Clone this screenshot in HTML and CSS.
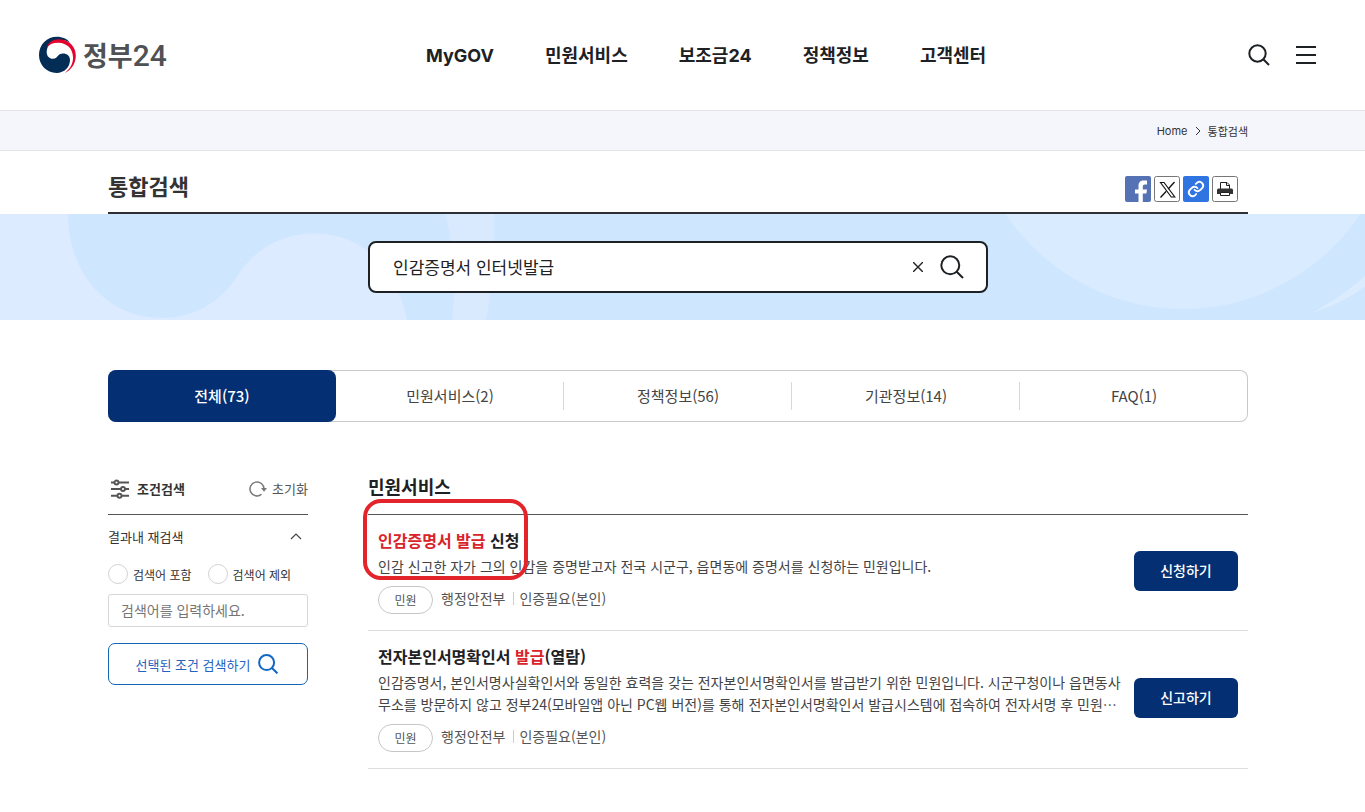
FILE: index.html
```html
<!DOCTYPE html>
<html lang="ko">
<head>
<meta charset="utf-8">
<meta name="viewport" content="width=device-width, initial-scale=1">
<title>통합검색 | 정부24</title>
<link rel="stylesheet" href="styles.css">
</head>
<body>
<header class="header">
  <a class="logo" href="#">
    <svg class="logo-mark" viewBox="0 0 38 38" aria-hidden="true">
      <path d="M1 19C1 8.500 9 .8 19 .8c5.500 0 10 2.200 13 5.700C28.500 4.500 25 3.600 21 4.200 13 5 8.500 10 8.700 16.500c.2 4 3 6.500 6.300 6.300 5-.2 4.500-5.300 10-5.300 4.200 0 7 2.500 7 6.500C32 31 26.500 36.900 18.500 36.900 8.500 36.900 1 29 1 19z" fill="#032d55"/>
      <path d="M8.500 12C10 6 15.500 3 21.500 3.200 31 3.500 38 10.500 37.800 20c-.2 7.500-4.500 14-11 17 5.500-4.500 8.500-9.500 8.200-16C34.600 12.500 29 7 20.500 6.700 15 6.600 11 8.500 8.500 12z" fill="#e4032e"/>
    </svg>
    <span>정부<span class="logo-num">24</span></span>
  </a>
  <nav class="gnb">
    <a href="#">MyGOV</a>
    <a href="#">민원서비스</a>
    <a href="#">보조금24</a>
    <a href="#">정책정보</a>
    <a href="#">고객센터</a>
  </nav>
  <div class="tools">
    <button type="button" aria-label="검색">
      <svg width="22" height="22" viewBox="0 0 22 22" fill="none" stroke="#1e2124" stroke-width="2"><circle cx="9.500" cy="9.500" r="8.200"/><path d="M15.300 15.300l5.700 5.700"/></svg>
    </button>
    <button type="button" aria-label="전체메뉴">
      <svg width="20" height="18" viewBox="0 0 20 18" fill="#1e2124"><path d="M0 0h20v2H0zM0 8h20v2H0zM0 16h20v2H0z"/></svg>
    </button>
  </div>
</header>

<div class="crumbs">
  <a href="#">Home</a>
  <svg width="6" height="10" viewBox="0 0 6 10" fill="none" stroke="#333" aria-hidden="true"><path d="M1 1l4 4-4 4"/></svg>
  <span>통합검색</span>
</div>

<div class="page-title">
  <h1>통합검색</h1>
  <div class="share">
    <button type="button" aria-label="페이스북 공유">
      <svg viewBox="0 0 26 26"><rect width="26" height="26" rx="2" fill="#5572b5"/><path d="M13.500 26v-8.500H10v-4h3.500V10c0-3.700 2-5.500 5-5.500H22v4h-2c-1.600 0-2.200.7-2.200 2v3H22l-.6 4h-3.600V26z" fill="#fff"/></svg>
    </button>
    <button type="button" aria-label="X 공유">
      <svg viewBox="0 0 26 26"><rect x=".5" y=".5" width="25" height="25" rx="2" fill="#fff" stroke="#777"/><path d="M6.500 6.500h3.500L20.800 21h-3.500z" fill="none" stroke="#111" stroke-width="1.100"/><path d="M20.500 6l-6.300 7M12.300 15.200L6.500 21.500" stroke="#111" stroke-width="1.300"/></svg>
    </button>
    <button type="button" aria-label="링크 복사">
      <svg viewBox="0 0 26 26"><rect width="26" height="26" rx="2" fill="#2f74e0"/><g transform="translate(4 4) scale(.75)" fill="none" stroke="#fff" stroke-width="2.500" stroke-linecap="round"><path d="M10 13a5 5 0 0 0 7.500.5l3-3a5 5 0 0 0-7-7l-1.700 1.700"/><path d="M14 11a5 5 0 0 0-7.500-.5l-3 3a5 5 0 0 0 7 7l1.700-1.700"/></g></svg>
    </button>
    <button type="button" aria-label="인쇄">
      <svg viewBox="0 0 26 26"><rect x=".5" y=".5" width="25" height="25" rx="2" fill="#fff" stroke="#777"/><path d="M8.500 13V6.500h6.500l2.500 2.500v4" fill="none" stroke="#222"/><path d="M14.500 6.500v3h3" fill="none" stroke="#222"/><path d="M6.500 12.500h13a1.500 1.500 0 0 1 1.500 1.500v4H5v-4a1.500 1.500 0 0 1 1.500-1.500z" fill="#333"/><path d="M8.500 16.500h9v3h-9z" fill="#fff" stroke="#222"/></svg>
    </button>
  </div>
</div>

<div class="banner">
  <svg class="banner-art" viewBox="0 0 1365 106" preserveAspectRatio="xMidYMin slice" aria-hidden="true">
    <path d="M0 0h68C68 60 108 104 161 104c34 0 60-17 75-40 18-29 45-44.500 78-44.500 49 0 82 33.500 93 86.500H0z" fill="#dcebff"/>
    <path d="M445 0h49q1 60-8 106h-34q7-55-7-106z" fill="#d9eaff"/>
    <circle cx="1183" cy="-118" r="213" fill="#d9ebff"/>
    <path d="M1365 62q-25 22-53 37 30-10 53-26z" fill="#dbecff"/>
  </svg>
  <form class="search" role="search">
    <input type="text" value="인감증명서 인터넷발급" aria-label="검색어">
    <button type="reset" aria-label="지우기">
      <svg width="10" height="10" viewBox="0 0 10 10" stroke="#222" stroke-width="1.400"><path d="M0 0l10 10M10 0L0 10"/></svg>
    </button>
    <button type="button" aria-label="검색">
      <svg width="24" height="24" viewBox="0 0 24 24" fill="none" stroke="#1e2124" stroke-width="2"><circle cx="10.300" cy="10.300" r="9"/><path d="M16.700 16.700l6.300 6.300"/></svg>
    </button>
  </form>
</div>

<nav class="tabs">
  <a class="tab active" href="#">전체(73)</a>
  <a class="tab" href="#">민원서비스(2)</a>
  <a class="tab" href="#">정책정보(56)</a>
  <a class="tab" href="#">기관정보(14)</a>
  <a class="tab" href="#">FAQ(1)</a>
</nav>

<div class="content">
  <aside class="filter">
    <div class="filter-head">
      <svg width="20" height="20" viewBox="0 0 20 20" fill="#fff" stroke="#555" stroke-width="1.900" aria-hidden="true"><path d="M1 3.500h18M1 10h18M1 16.800h18"/><circle cx="6.500" cy="3.500" r="2"/><circle cx="13" cy="10" r="2"/><circle cx="9.500" cy="16.800" r="2"/></svg>
      <h2>조건검색</h2>
      <button type="button" class="reset">
        <svg width="18" height="16" viewBox="0 0 18 16" fill="none" stroke="#777" stroke-width="1.500" aria-hidden="true"><path d="M12.500 13.300A7 7 0 1 1 15 8"/><path d="M12 7h6l-3 3.800z" fill="#777" stroke="none"/></svg>
        초기화
      </button>
    </div>
    <button type="button" class="fold">
      결과내 재검색
      <svg width="12" height="7" viewBox="0 0 12 7" fill="none" stroke="#444" stroke-width="1.200" aria-hidden="true"><path d="M1 6l5-5 5 5"/></svg>
    </button>
    <div class="radios">
      <label><input type="radio" name="scope">검색어 포함</label>
      <label><input type="radio" name="scope">검색어 제외</label>
    </div>
    <input class="keyword" type="text" placeholder="검색어를 입력하세요." aria-label="결과내 검색어">
    <button type="button" class="apply">
      선택된 조건 검색하기
      <svg width="20" height="20" viewBox="0 0 20 20" fill="none" stroke="#1266c4" stroke-width="2" aria-hidden="true"><circle cx="8.600" cy="8.600" r="7.500"/><path d="M14 14l5.400 5.400"/></svg>
    </button>
  </aside>

  <main class="results">
    <h2>민원서비스</h2>
    <article class="item marked">
      <div class="item-body">
        <h3><a href="#"><em>인감증명서 발급</em> 신청</a></h3>
        <p>인감 신고한 자가 그의 인감을 증명받고자 전국 시군구, 읍면동에 증명서를 신청하는 민원입니다.</p>
        <div class="meta"><span class="chip">민원</span><span>행정안전부</span><span class="auth">인증필요(본인)</span></div>
      </div>
      <button type="button" class="go">신청하기</button>
    </article>
    <article class="item">
      <div class="item-body">
        <h3><a href="#">전자본인서명확인서 <em>발급</em>(열람)</a></h3>
        <p>인감증명서, 본인서명사실확인서와 동일한 효력을 갖는 전자본인서명확인서를 발급받기 위한 민원입니다. 시군구청이나 읍면동사무소를 방문하지 않고 정부24(모바일앱 아닌 PC웹 버전)를 통해 전자본인서명확인서 발급시스템에 접속하여 전자서명 후 민원⋯</p>
        <div class="meta"><span class="chip">민원</span><span>행정안전부</span><span class="auth">인증필요(본인)</span></div>
      </div>
      <button type="button" class="go">신고하기</button>
    </article>
  </main>
</div>
</body>
</html>
```
FILE: styles.css
```css
:root {
  --sans: "Noto Sans CJK KR", sans-serif;
  --mixed: Inter, "Noto Sans CJK KR", sans-serif;
  --ink: #1e2124;
  --navy: #052f73;
  --left: 108px;
  --right: 117px;
}

*, *::before { box-sizing: border-box; }

body {
  margin: 0;
  padding-bottom: 40px;
  background: #fff;
  color: var(--ink);
  font-family: var(--sans);
  font-size: 14px;
}

h1, h2, h3, p { margin: 0; }
a { color: inherit; text-decoration: none; }
button { margin: 0; padding: 0; border: 0; background: none; color: inherit; font: inherit; cursor: pointer; }
button svg { display: block; }
input { font: inherit; color: inherit; }

.header {
  display: flex;
  align-items: center;
  height: 110px;
  padding: 0 49px 0 38px;
}

.logo {
  display: flex;
  align-items: center;
  gap: 7px;
  width: 388px;
  color: #505154;
  font-size: 27px;
  font-weight: 700;
  line-height: 38px;
}

.logo-mark { width: 38px; height: 38px; }
.logo-num { font-family: Roboto, sans-serif; font-size: 30px; font-weight: 500; }

.gnb {
  display: flex;
  gap: 51px;
  padding-top: 2px;
  font-family: var(--mixed);
  font-size: 18px;
  font-weight: 700;
  line-height: 28px;
  white-space: nowrap;
}

.tools { display: flex; align-items: center; gap: 26px; margin-left: auto; }

.crumbs {
  display: flex;
  align-items: center;
  justify-content: flex-end;
  gap: 7px;
  height: 41px;
  padding-right: var(--right);
  border: solid #e4e5e9;
  border-width: 1px 0;
  background: #f5f6fb;
  color: #333;
  font-family: var(--mixed);
  font-size: 11px;
}

.page-title {
  display: flex;
  align-items: center;
  justify-content: space-between;
  height: 63px;
  margin: 0 var(--right) 0 var(--left);
  padding: 14px 10px 0 0;
  border-bottom: 2px solid #2c2f33;
}

.page-title h1 { padding-bottom: 8px; color: #333; font-size: 22px; line-height: 32px; }

.share { display: flex; gap: 3px; }
.share svg { width: 26px; height: 26px; }

.banner {
  position: relative;
  display: flex;
  justify-content: center;
  padding: 27px 9px 27px 0;
  background: #cfe6ff;
}

.banner-art { position: absolute; inset: 0; width: 100%; height: 100%; }

.search {
  position: relative;
  display: flex;
  align-items: center;
  gap: 17px;
  width: 620px;
  height: 52px;
  padding: 0 22px 0 23px;
  border: 2px solid var(--ink);
  border-radius: 8px;
  background: #fff;
}

.search input { flex: 1; min-width: 0; padding: 0 0 2px; border: 0; outline: 0; font-size: 17px; }

.tabs {
  display: grid;
  grid-template-columns: repeat(5, 1fr);
  height: 52px;
  margin: 50px var(--right) 0 var(--left);
  border-radius: 8px;
  box-shadow: inset 0 0 0 1px #c6c9cc;
  font-size: 15px;
  color: #444;
}

.tab { display: flex; align-items: center; justify-content: center; padding-bottom: 2px; }
.tab.active { border-radius: 8px; background: var(--navy); color: #fff; font-weight: 500; }
.tab:not(.active):not(:last-child) {
  background: linear-gradient(#d8d8d8, #d8d8d8) right center / 1px 28px no-repeat;
}

.content {
  display: grid;
  grid-template-columns: 200px minmax(0, 1fr);
  gap: 60px;
  margin: 41px var(--right) 0 var(--left);
}

.filter { font-size: 13px; }

.filter-head {
  display: flex;
  align-items: center;
  height: 52px;
  padding-left: 2px;
  border-bottom: 1px solid #555;
}

.filter-head h2 { margin-left: 7px; color: #333; font-size: 13px; }
.reset { display: flex; align-items: center; gap: 5px; margin-left: auto; color: #555; }

.fold {
  display: flex;
  align-items: center;
  justify-content: space-between;
  width: 100%;
  height: 44px;
  padding: 0 6px 2px 0;
  color: #333;
}

.radios { display: flex; gap: 16px; margin-top: 5px; font-size: 12px; color: #333; }
.radios label { display: flex; align-items: center; gap: 5px; height: 20px; white-space: nowrap; }
.radios input { appearance: none; width: 20px; height: 20px; margin: 0; border: 1px solid #d3d3d3; border-radius: 50%; }
.radios input:checked { border: 6px solid #1266c4; }

.keyword {
  display: block;
  width: 100%;
  height: 33px;
  margin-top: 10px;
  padding: 0 12px 2px;
  border: 1px solid #d6d6d6;
  border-radius: 3px;
  font-size: 14px;
}

.keyword::placeholder { color: #757575; }

.apply {
  display: flex;
  align-items: center;
  justify-content: center;
  gap: 8px;
  width: 100%;
  height: 42px;
  margin-top: 16px;
  padding-right: 2px;
  border: 1px solid #1266b4;
  border-radius: 7px;
  color: #2464bf;
}

.results > h2 { height: 52px; border-bottom: 1px solid #555; font-size: 18px; line-height: 46px; }

.item {
  position: relative;
  display: flex;
  align-items: center;
  justify-content: space-between;
  gap: 8px;
  padding: 13px 10px 16px;
  border-bottom: 1px solid #dedede;
}

/* Highlight frame around the first result's title */
.marked::before {
  content: "";
  position: absolute;
  top: -16px;
  left: -5px;
  width: 165px;
  height: 81px;
  border: 4px solid #e3242b;
  border-radius: 18px;
  pointer-events: none;
}

.item h3 { font-size: 16px; line-height: 24px; }
.item em { color: #d9232a; font-style: normal; }
.item p { margin-top: 3px; color: #444; line-height: 22px; word-break: break-all; }

.meta { display: flex; align-items: center; margin-top: 9px; color: #555; line-height: 20px; }
.meta > span:not(.chip) { padding-bottom: 4px; }

.chip {
  width: 55px;
  margin-right: 8px;
  border: 1px solid #c6c6c6;
  border-radius: 14px;
  font-size: 12px;
  line-height: 26px;
  text-align: center;
}

.auth { display: flex; align-items: center; }
.auth::before { content: ""; width: 1px; height: 13px; margin: 0 5px 0 8px; background: #ccc; }

.go {
  flex: none;
  width: 104px;
  height: 40px;
  padding-bottom: 2px;
  border-radius: 6px;
  background: var(--navy);
  color: #fff;
  font-weight: 500;
}
```
